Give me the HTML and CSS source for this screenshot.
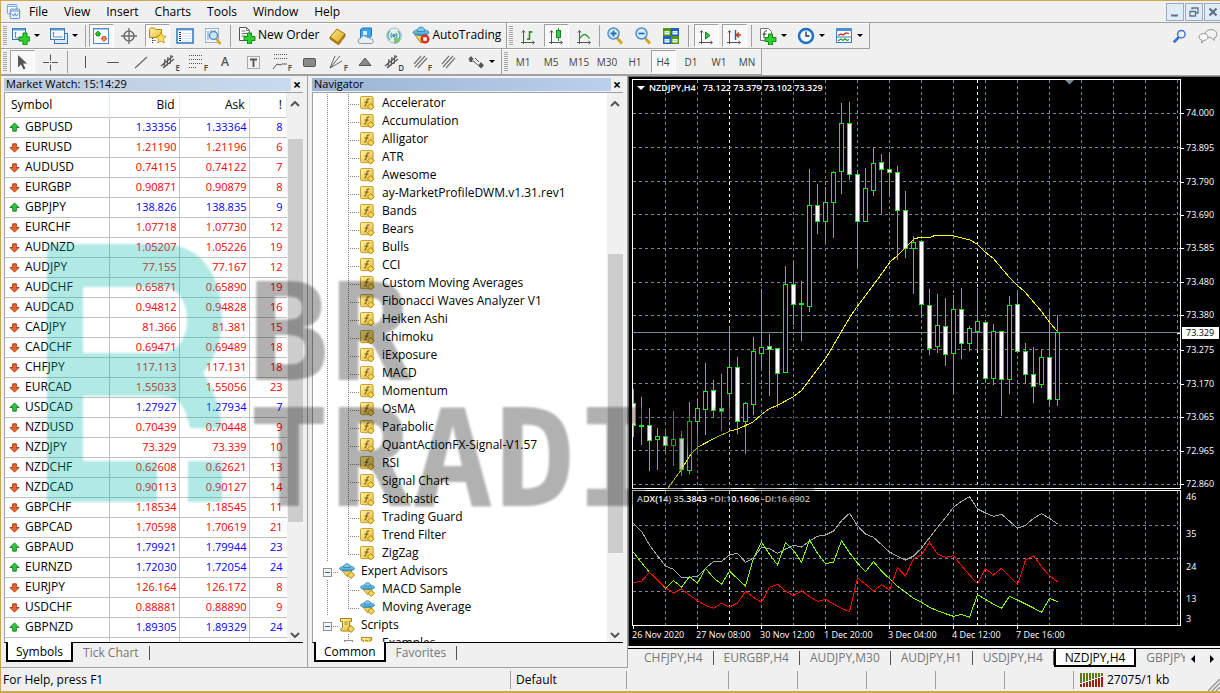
FILE: index.html
```html
<!DOCTYPE html>
<html lang="en">
<head>
<meta charset="utf-8">
<title>NZDJPY,H4</title>
<link rel="stylesheet" href="styles.css">
</head>
<body>
<svg class="sprite" aria-hidden="true">
  <defs>
    <linearGradient id="gold" x1="0" y1="0" x2="1" y2="1"><stop offset="0" stop-color="#fbe68a"/><stop offset="1" stop-color="#dba81c"/></linearGradient>
    <linearGradient id="pale-gold" x1="0" y1="0" x2="1" y2="1"><stop offset="0" stop-color="#fff3a8"/><stop offset="1" stop-color="#e6bc3c"/></linearGradient>
    <linearGradient id="sky" x1="0" y1="0" x2="0" y2="1"><stop offset="0" stop-color="#9fdcf5"/><stop offset="1" stop-color="#2b8cc4"/></linearGradient>
  </defs>
  <symbol id="logo" viewBox="0 0 16 16"><rect x="1.5" y=".5" width="10" height="10" rx="1" fill="#f5f9ff" stroke="#6c9be0"/><path d="M2 2.500h9" stroke="#6c9be0"/><rect x="4.500" y="5.500" width="10" height="10" rx="1" fill="#f5f9ff" stroke="#4a82d8"/><path d="M5 7.500h9" stroke="#4a82d8"/><path d="M6 10l2 3 1.500-3 1.500 3 2-3" fill="none" stroke="#4a82d8"/></symbol>
  <symbol id="new-chart" viewBox="0 0 18 18"><rect x=".5" y="1.500" width="13" height="11" fill="#f4f9fe" stroke="#3c78b4"/><path d="M1 2.500h12" stroke="#5b9bd5" stroke-width="2"/><path d="M3.500 5v6h8M2.500 6h2M10.500 10v2" stroke="#6d8fb0" fill="none"/><path d="M11 6h4v4h3v4h-3v4h-4v-4H7v-4h4z" fill="#2fd02f" stroke="#128a12"/></symbol>
  <symbol id="profiles" viewBox="0 0 18 18"><rect x="4.500" y="6.500" width="13" height="10" fill="#dceaf8" stroke="#3c78b4"/><rect x=".5" y="1.500" width="14" height="11" fill="#f4f9fe" stroke="#3c78b4"/><path d="M1 2.500h13" stroke="#5b9bd5" stroke-width="2"/><path d="M3.500 5v5h9M2.500 6h2" stroke="#6d8fb0" fill="none"/></symbol>
  <symbol id="market" viewBox="0 0 18 18"><rect x="1.500" y="1.500" width="15" height="15" fill="#fbfdff" stroke="#4a90d0"/><path d="M2 2.500h14" stroke="#a9cdee"/><path d="M6 4l3 3H7.500v2h-3V7H3z" fill="#2bc02b" stroke="#128a12" stroke-width=".8"/><path d="M12 14.500l-3-3h1.500v-2h3v2H15z" fill="#ff8a5a" stroke="#c43a0a" stroke-width=".8"/></symbol>
  <symbol id="data-window" viewBox="0 0 18 18"><circle cx="9" cy="9" r="5" fill="none" stroke="#6e6e6e" stroke-width="1.600"/><path d="M9 1v16M1 9h16" stroke="#6e6e6e" stroke-width="1.400"/></symbol>
  <symbol id="navigator" viewBox="0 0 18 18"><path d="M1.500 2.500l1-1.500h4l1 1.500h6v8h-12z" fill="url(#pale-gold)" stroke="#b98a10"/><path d="M4.500 11v6M4.500 13.500h4" stroke="#333" stroke-dasharray="1 1"/><path d="M13 5.500l1.600 3.500 3.400.4-2.600 2.500.8 4.100L13 14l-3.200 2 .8-4.100L8 9.400l3.400-.4z" fill="#ffe25a" stroke="#b98a10" stroke-width=".8"/></symbol>
  <symbol id="terminal" viewBox="0 0 18 18"><rect x="1" y="2" width="16" height="14" fill="#fafdff" stroke="#3c7cc0" stroke-width="1.600"/><path d="M2 3.500h14" stroke="#b5d4f0"/><path d="M4 5v10" stroke="#234" stroke-width="2" stroke-dasharray="1 1"/><path d="M6 6.500h9M6 9h9M6 11.500h9M6 14h9" stroke="#d5e0ec"/></symbol>
  <symbol id="tester" viewBox="0 0 18 18"><rect x="1.500" y="1.500" width="13" height="14" fill="#eef4fa" stroke="#a3b3c2"/><path d="M4 4v9M7 3v5M11 3v4" stroke="#8897a6"/><circle cx="9.500" cy="8.500" r="4" fill="#cbe7fa" stroke="#4f90c8" stroke-width="1.400"/><path d="M12.500 12l4 5" stroke="#d9a520" stroke-width="2.500"/></symbol>
  <symbol id="order" viewBox="0 0 18 18"><path d="M1.500 1.500h7l3 3v10h-10z" fill="#fff" stroke="#555"/><path d="M8.500 1.500v3h3M3.500 5h4M3.500 7.500h6M3.500 10h4" fill="none" stroke="#777"/><path d="M9.500 7h4v3.500H17v4h-3.500V18h-4v-3.500H6v-4h3.500z" fill="#2fd02f" stroke="#128a12"/></symbol>
  <symbol id="book" viewBox="0 0 18 18"><path d="M1 10L8 2l8 5-7 9z" fill="url(#gold)" stroke="#a8720c"/><path d="M1 10l8 6 7-9v2.500L9.500 18 1 12z" fill="#c98a12" stroke="#8f5f08" stroke-width=".7"/></symbol>
  <symbol id="cloud" viewBox="0 0 18 18"><path d="M3.500 2.500l2-1.500h9v8l-2 2h-9z" fill="#3aa4ea" stroke="#1d78bf"/><path d="M6 4h4v4H6z" fill="#d7effc"/><path d="M3.500 16.500a2.500 2.500 0 010-5 3.500 3.500 0 016.500-1 3 3 0 013.500 1.500 2.300 2.300 0 011 4.500z" fill="#e9eef5" stroke="#8797ab"/></symbol>
  <symbol id="signal" viewBox="0 0 18 18"><circle cx="9" cy="8.500" r="7.500" fill="#e4efe8" stroke="#9cc0d8"/><path d="M5 13a6 6 0 010-9M13 4a6 6 0 010 9M7 11a3.500 3.500 0 010-5M11 6a3.500 3.500 0 010 5" fill="none" stroke="#54a8a0" stroke-width="1.300"/><circle cx="9" cy="8.500" r="1.800" fill="#3f90d0"/><path d="M9 10v7c3 0 6-2 7-5z" fill="#7fc27f"/></symbol>
  <symbol id="auto" viewBox="0 0 18 18"><path d="M3 9l6 8 6-5-1-4z" fill="url(#gold)" stroke="#b98a10"/><ellipse cx="9" cy="6.500" rx="8" ry="3" fill="url(#sky)" stroke="#2a7fb0" stroke-width=".8"/><path d="M5 5.500c0-6 8-6 8 0z" fill="#7cc8ec" stroke="#2a7fb0" stroke-width=".8"/><circle cx="13" cy="13" r="4.500" fill="#e02c18"/><rect x="11.200" y="11.200" width="3.600" height="3.600" fill="#fff"/></symbol>
  <symbol id="bars" viewBox="0 0 18 18"><path d="M4.500 4v13M2 15.500h13M3 5.500l1.500-2L6 5.500M13.500 14l2 1.500-2 1.500" stroke="#555" fill="none"/><path d="M10.500 4v9M10.500 5h3M8 12h2.500" stroke="#158a15" stroke-width="1.500"/></symbol>
  <symbol id="candles" viewBox="0 0 18 18"><path d="M4.500 4v13M2 15.500h13M3 5.500l1.500-2L6 5.500M13.500 14l2 1.500-2 1.500" stroke="#555" fill="none"/><path d="M11.500 1v13" stroke="#158a15"/><rect x="9.500" y="3.500" width="4" height="7" fill="#2fd04f" stroke="#158a15"/></symbol>
  <symbol id="line" viewBox="0 0 18 18"><path d="M4.500 4v13M2 15.500h13M3 5.500l1.500-2L6 5.500M13.500 14l2 1.500-2 1.500" stroke="#555" fill="none"/><path d="M4 12c2-2 4-5 6-4.500s3 2 4.500 4" stroke="#2f9a3a" stroke-width="1.300" fill="none"/></symbol>
  <symbol id="zoom-in" viewBox="0 0 18 18"><path d="M11 11l5 5.500" stroke="#d9a520" stroke-width="3"/><circle cx="7.500" cy="6.500" r="5.500" fill="#d6edfb" stroke="#4f90d0" stroke-width="1.500"/><path d="M4.500 6.500h6M7.500 3.500v6" stroke="#2d6cb4" stroke-width="1.800"/></symbol>
  <symbol id="zoom-out" viewBox="0 0 18 18"><path d="M11 11l5 5.500" stroke="#d9a520" stroke-width="3"/><circle cx="7.500" cy="6.500" r="5.500" fill="#d6edfb" stroke="#4f90d0" stroke-width="1.500"/><path d="M4.500 6.500h6" stroke="#2d6cb4" stroke-width="1.800"/></symbol>
  <symbol id="tile" viewBox="0 0 18 18"><path d="M1 1h8v8H1zM9 9h8v8H9z" fill="#4f9a10"/><path d="M9 1h8v8H9zM1 9h8v8H1z" fill="#2060c0"/><path d="M2.500 4h5v3.500h-5zM10.500 4h5v3.500h-5zM2.500 12h5v3.500h-5zM10.500 12h5v3.500h-5z" fill="#f4faf0"/><path d="M3 5.500h4M11 5.500h4M3 13.500h4M11 13.500h4" stroke="#b5cbe0"/></symbol>
  <symbol id="scroll" viewBox="0 0 18 18"><path d="M4.500 4v13M2 15.500h13M3 5.500l1.500-2L6 5.500M13.500 14l2 1.500-2 1.500" stroke="#555" fill="none"/><path d="M8.500 5l4.500 3.500L8.500 12z" fill="#2fc04f" stroke="#158a15"/></symbol>
  <symbol id="shift" viewBox="0 0 18 18"><path d="M4.500 4v13M2 15.500h13M3 5.500l1.500-2L6 5.500M13.500 14l2 1.500-2 1.500" stroke="#555" fill="none"/><path d="M10.500 3v10" stroke="#2864b4" stroke-width="1.500"/><path d="M16 8h-4M14 5.500L11.500 8l2.500 2.500" stroke="#c03a10" stroke-width="1.500" fill="none"/></symbol>
  <symbol id="indicators" viewBox="0 0 18 18"><path d="M1.500 1.500h8l3 3v9h-11z" fill="#fff" stroke="#777"/><path d="M8 4c-3-1-3 2-3 7M3.500 7h4" stroke="#333" fill="none"/><path d="M9.500 7h4v3.500H17v4h-3.500V18h-4v-3.500H6v-4h3.500z" fill="#2fd02f" stroke="#128a12"/></symbol>
  <symbol id="clock" viewBox="0 0 18 18"><circle cx="9" cy="9" r="7" fill="#eef5fb" stroke="#1c6fc4" stroke-width="2.500"/><path d="M9 4.500V9h3.500" fill="none" stroke="#333" stroke-width="1.300"/></symbol>
  <symbol id="template" viewBox="0 0 18 18"><rect x="1.500" y="1.500" width="15" height="14" fill="#fbfdff" stroke="#3c7cc0"/><path d="M1 2.500h16" stroke="#4a90d8" stroke-width="3"/><path d="M3 8.500l3-1.500 2 1 3-2 3 .5" stroke="#b02a10" fill="none" stroke-width="1.200"/><path d="M2 10h14" stroke="#3c7cc0"/><path d="M3 14l3-2 2 1.500 2-2 2 2 2-1" stroke="#1c9a2c" fill="none" stroke-width="1.200"/></symbol>
  <symbol id="search" viewBox="0 0 18 18"><path d="M8 10l-6 6" stroke="#3a6cd8" stroke-width="3"/><circle cx="10.500" cy="7" r="4.200" fill="#eef3ff" stroke="#3a6cd8" stroke-width="1.500"/></symbol>
  <symbol id="chat" viewBox="0 0 22 18"><path d="M8 7c0-7 13-7 13 0 0 3-2 4-3 4v3l-3-3c-5 0-7-1-7-4z" fill="#f2f2f2" stroke="#888"/><path d="M1 10c0-5 10-5 10 0 0 3-3 4-5 4l-2 3v-3.500c-1.500-.3-3-1-3-3.500z" fill="#fafafa" stroke="#888"/></symbol>

  <symbol id="cursor" viewBox="0 0 18 18"><path d="M5 2v12.500l3-3 2.500 5 2-1-2.500-5h4z" fill="#555"/></symbol>
  <symbol id="cross" viewBox="0 0 18 18"><path d="M9.500 1.500v6M9.500 11.500v6M2 9.500h6M11 9.500h6M9 9.500h1" stroke="#555"/></symbol>
  <symbol id="vline" viewBox="0 0 18 18"><path d="M9.500 3v12" stroke="#555"/></symbol>
  <symbol id="hline" viewBox="0 0 18 18"><path d="M3 9.500h12" stroke="#555"/></symbol>
  <symbol id="trend" viewBox="0 0 18 18"><path d="M3 15L15 4" stroke="#666" stroke-width="1.200"/></symbol>
  <symbol id="channel" viewBox="0 0 18 18"><path d="M1 13L13 3M3 15L14 6M5 6l-1 9M8 4l-1 9M11 2l-1 9" stroke="#555" stroke-width="1.200"/></symbol>
  <symbol id="fibo" viewBox="0 0 18 18"><path d="M1 2.500h14M1 6.500h14M1 10.500h14M1 14.500h8" stroke="#555" stroke-dasharray="1 1"/></symbol>
  <symbol id="fibo-arc" viewBox="0 0 18 18"><path d="M2 1.500h14M2 5.500h14" stroke="#555" stroke-dasharray="1 1"/><path d="M1 16l4-5 3 1 2-1h5" stroke="#555" fill="none"/></symbol>
  <symbol id="label" viewBox="0 0 18 18"><rect x="3.500" y="3.500" width="12" height="12" fill="none" stroke="#666" stroke-dasharray="1 1"/><path d="M6 6.500h7M9.500 6v8" stroke="#555" stroke-width="1.800"/></symbol>
  <symbol id="rect" viewBox="0 0 18 18"><rect x="3.500" y="5.500" width="12" height="8" rx="1" fill="#8a8a8a" stroke="#555"/></symbol>
  <symbol id="fan" viewBox="0 0 18 18"><path d="M2 15L7 3M2 15L12 3M2 15l12-7" stroke="#666" fill="none"/></symbol>
  <symbol id="triangle" viewBox="0 0 18 18"><path d="M9 5l6 7.500H3z" fill="#8a8a8a" stroke="#555"/></symbol>
  <symbol id="strokes" viewBox="0 0 18 18"><path d="M2 11L9 3M3 14L13 3M6 15l9-10" stroke="#777" stroke-width="1.200"/></symbol>
  <symbol id="arrows" viewBox="0 0 18 18"><path d="M4 3l3 3.500H5.500V9h-3V6.500H1z" fill="#555"/><path d="M6 8l5 4" stroke="#555"/><path d="M8 5l4 4" stroke="#555"/><path d="M14 9l3 3.500-3 3-3-3z" fill="#555"/></symbol>

  <symbol id="up" viewBox="0 0 12 12"><path d="M6 1l5 5H8v4H4V6H1z" fill="#2cc83c" stroke="#127a1c"/></symbol>
  <symbol id="down" viewBox="0 0 12 12"><path d="M6 11L1 6h3V2h4v4h3z" fill="#f0642c" stroke="#a0340c"/></symbol>
  <symbol id="fx" viewBox="0 0 16 16"><rect x=".5" y=".5" width="13.500" height="13" rx="1.500" fill="url(#pale-gold)" stroke="#c49a28"/><path d="M10 3.500c-2-1.200-2.600.5-2.900 2.500S6.500 11 4.500 10.500M5 6.500h4" fill="none" stroke="#8a6210" stroke-width="1.200"/><path d="M11.500 8l3.500 3.500-3.500 3.500L8 11.500z" fill="#f7d652" stroke="#a87c10"/></symbol>
  <symbol id="expert" viewBox="0 0 16 16"><path d="M3 7.500l5 6 5-3-1-4z" fill="#f0d060" stroke="#a87c10" stroke-width=".8"/><ellipse cx="8" cy="5.500" rx="7.500" ry="2.500" fill="url(#sky)" stroke="#2a7fb0" stroke-width=".8"/><path d="M4.500 4.500c0-5 7-5 7 0z" fill="#7cc8ec" stroke="#2a7fb0" stroke-width=".8"/><path d="M12 8.500l3.500 3.500-3.500 3.500L8.500 12z" fill="#f7d652" stroke="#a87c10"/></symbol>
  <symbol id="script" viewBox="0 0 16 16"><path d="M1.500 1.500h11v3h-2v6l2 1.500-1 2h-9l-1-2 2-1.500v-6h-2z" fill="url(#pale-gold)" stroke="#a87c10"/><path d="M5.500 5h3M5.500 7h3" stroke="#a87c10"/><path d="M12 8.500l3.500 3.500-3.500 3.500L8.500 12z" fill="#f7d652" stroke="#a87c10"/></symbol>
</svg>

<div class="app">
  <header class="menubar">
    <svg class="logo" aria-hidden="true"><use href="#logo"/></svg>
    <nav class="menu">
      <button>File</button><button>View</button><button>Insert</button><button>Charts</button><button>Tools</button><button>Window</button><button>Help</button>
    </nav>
    <div class="window-buttons">
      <button aria-label="Minimize"><svg viewBox="0 0 16 16"><path d="M4 11.500h7" stroke="#5f7086" stroke-width="2"/></svg></button>
      <button aria-label="Restore"><svg viewBox="0 0 16 16"><path d="M6 5.500V4h6v5h-2M4 7.500h5.500V12H4z" fill="none" stroke="#5f7086" stroke-width="1.300"/></svg></button>
      <button aria-label="Close"><svg viewBox="0 0 16 16"><path d="M4.500 4.500l7 7M11.500 4.500l-7 7" stroke="#5f7086" stroke-width="2.200"/></svg></button>
    </div>
  </header>

  <div class="toolbar-row">
    <div class="toolbar" role="toolbar" aria-label="Standard">
      <span class="grip"></span>
      <button class="tool drop" aria-label="New Chart"><svg><use href="#new-chart"/></svg></button>
      <button class="tool drop" aria-label="Profiles"><svg><use href="#profiles"/></svg></button>
      <span class="sep tight"></span>
      <button class="tool on" aria-label="Market Watch"><svg><use href="#market"/></svg></button>
      <button class="tool" aria-label="Data Window"><svg><use href="#data-window"/></svg></button>
      <button class="tool on" aria-label="Navigator"><svg><use href="#navigator"/></svg></button>
      <button class="tool" aria-label="Terminal"><svg><use href="#terminal"/></svg></button>
      <button class="tool" aria-label="Strategy Tester"><svg><use href="#tester"/></svg></button>
      <span class="sep"></span>
      <button class="tool wide"><svg><use href="#order"/></svg>New Order</button>
      <button class="tool" aria-label="MetaEditor"><svg><use href="#book"/></svg></button>
      <button class="tool" aria-label="Hosting"><svg><use href="#cloud"/></svg></button>
      <button class="tool" aria-label="Signals"><svg><use href="#signal"/></svg></button>
      <button class="tool wide"><svg><use href="#auto"/></svg>AutoTrading</button>
    </div>
    <div class="toolbar" role="toolbar" aria-label="Charts">
      <span class="grip"></span>
      <button class="tool" aria-label="Bar Chart"><svg><use href="#bars"/></svg></button>
      <button class="tool on" aria-label="Candlesticks"><svg><use href="#candles"/></svg></button>
      <button class="tool" aria-label="Line Chart"><svg><use href="#line"/></svg></button>
      <span class="sep tight"></span>
      <button class="tool" aria-label="Zoom In"><svg><use href="#zoom-in"/></svg></button>
      <button class="tool" aria-label="Zoom Out"><svg><use href="#zoom-out"/></svg></button>
      <button class="tool" aria-label="Tile Windows"><svg><use href="#tile"/></svg></button>
      <span class="sep"></span>
      <button class="tool on" aria-label="Auto Scroll"><svg><use href="#scroll"/></svg></button>
      <button class="tool on" aria-label="Chart Shift"><svg><use href="#shift"/></svg></button>
      <span class="sep"></span>
      <button class="tool drop" aria-label="Indicators"><svg><use href="#indicators"/></svg></button>
      <button class="tool drop" aria-label="Periods"><svg><use href="#clock"/></svg></button>
      <button class="tool drop" aria-label="Templates"><svg><use href="#template"/></svg></button>
    </div>
    <div class="toolbar-end">
      <button aria-label="Search"><svg><use href="#search"/></svg></button>
      <button aria-label="Chat"><svg><use href="#chat"/></svg></button>
    </div>
  </div>

  <div class="toolbar-row">
    <div class="toolbar" role="toolbar" aria-label="Line Studies">
      <span class="grip"></span>
      <button class="tool on" aria-label="Cursor"><svg><use href="#cursor"/></svg></button>
      <button class="tool" aria-label="Crosshair"><svg><use href="#cross"/></svg></button>
      <span class="sep"></span>
      <button class="tool" aria-label="Vertical Line"><svg><use href="#vline"/></svg></button>
      <button class="tool" aria-label="Horizontal Line"><svg><use href="#hline"/></svg></button>
      <button class="tool" aria-label="Trendline"><svg><use href="#trend"/></svg></button>
      <button class="tool" aria-label="Equidistant Channel"><svg><use href="#channel"/></svg><sub>E</sub></button>
      <button class="tool" aria-label="Fibonacci Retracement"><svg><use href="#fibo"/></svg><sub>F</sub></button>
      <button class="tool letter">A</button>
      <button class="tool" aria-label="Text Label"><svg><use href="#label"/></svg></button>
      <button class="tool" aria-label="Fibonacci Arcs"><svg><use href="#fibo-arc"/></svg><sub>F</sub></button>
      <button class="tool" aria-label="Rectangle"><svg><use href="#rect"/></svg></button>
      <button class="tool" aria-label="Fibonacci Fan"><svg><use href="#fan"/></svg><sub>F</sub></button>
      <button class="tool" aria-label="Triangle"><svg><use href="#triangle"/></svg></button>
      <button class="tool" aria-label="Deviation Channel"><svg><use href="#channel"/></svg><sub>D</sub></button>
      <button class="tool" aria-label="Fibonacci Channel"><svg><use href="#strokes"/></svg><sub>F</sub></button>
      <button class="tool" aria-label="Parallel Lines"><svg><use href="#strokes"/></svg></button>
      <button class="tool drop" aria-label="Arrows"><svg><use href="#arrows"/></svg></button>
    </div>
    <div class="toolbar" role="toolbar" aria-label="Periodicity">
      <span class="grip"></span>
      <button class="tool period">M1</button><button class="tool period">M5</button><button class="tool period">M15</button><button class="tool period">M30</button><button class="tool period">H1</button><button class="tool period on">H4</button><button class="tool period">D1</button><button class="tool period">W1</button><button class="tool period">MN</button>
    </div>
  </div>

  <main class="workspace">
    <section class="panel market">
      <div class="panel-head"><h2>Market Watch: 15:14:29</h2><button aria-label="Close">×</button></div>
      <div class="panel-body">
        <div class="scroll-content">
          <table class="quotes">
            <colgroup><col class="c-symbol"><col class="c-price"><col class="c-price"><col></colgroup>
            <thead><tr><th>Symbol</th><th>Bid</th><th>Ask</th><th>!</th></tr></thead>
            <tbody id="quotes"></tbody>
          </table>
        </div>
        <div class="scrollbar"><svg viewBox="0 0 10 6"><path d="M1 5l4-4 4 4"/></svg><div class="track"><i class="thumb thumb-market"></i></div><svg viewBox="0 0 10 6"><path d="M1 1l4 4 4-4"/></svg></div>
      </div>
      <div class="tabs"><button class="active">Symbols</button><button>Tick Chart</button></div>
    </section>

    <section class="panel navigator">
      <div class="panel-head focus"><h2>Navigator</h2><button aria-label="Close">×</button></div>
      <div class="panel-body">
        <div class="scroll-content"><ul class="tree" id="tree"></ul></div>
        <div class="scrollbar"><svg viewBox="0 0 10 6"><path d="M1 5l4-4 4 4"/></svg><div class="track"><i class="thumb thumb-nav"></i></div><svg viewBox="0 0 10 6"><path d="M1 1l4 4 4-4"/></svg></div>
      </div>
      <div class="tabs"><button class="active">Common</button><button>Favorites</button></div>
    </section>

    <section class="charts">
      <div class="chart">
        <div class="plot">
          <svg id="price" viewBox="633 80 547 408" preserveAspectRatio="none"></svg>
          <p class="plot-title"><svg viewBox="0 0 8 4"><path d="M0 0h8L4 4z" fill="#fff"/></svg><span>NZDJPY,H4&nbsp;&nbsp; 73.122 73.379 73.102 73.329</span></p>
        </div>
        <div class="axis" id="price-axis"></div>
        <div class="plot">
          <svg id="adx" viewBox="633 491 547 134" preserveAspectRatio="none"></svg>
          <p class="plot-title">ADX(14) 35.3843 +DI:10.1606 -DI:16.6902</p>
        </div>
        <div class="axis" id="adx-axis"></div>
        <div class="time" id="time"></div>
      </div>
      <div class="chart-tabs">
        <div class="chart-tab-list">
          <button>CHFJPY,H4</button><button>EURGBP,H4</button><button>AUDJPY,M30</button><button>AUDJPY,H1</button><button>USDJPY,H4</button><button class="active">NZDJPY,H4</button><button>GBPJPY,H4</button>
        </div>
        <div class="tab-scroll">
          <button aria-label="Scroll left"><svg viewBox="0 0 4 8"><path d="M4 0v8L0 4z"/></svg></button>
          <button aria-label="Scroll right"><svg viewBox="0 0 4 8"><path d="M0 0v8l4-4z"/></svg></button>
        </div>
      </div>
    </section>
  </main>

  <footer class="statusbar">
    <span class="help">For Help, press F1</span><span class="profile">Default</span><span class="cell time-cell"></span><span class="cell"></span><span class="cell"></span><span class="cell"></span><span class="cell"></span><span class="cell"></span>
    <span class="traffic"><svg id="signal-bars" viewBox="0 0 24 14"></svg>27075/1 kb</span>
    <svg class="resize" viewBox="0 0 12 12"><path d="M0 12L12 0M4 12l8-8M8 12l4-4" stroke="#999" stroke-width="1.500"/></svg>
  </footer>

  <svg class="watermark" width="1220" height="693" aria-hidden="true">
    <path fill="#00b8a8" fill-rule="evenodd" d="M47 244H165C205 246 222 280 222 318C222 345 213 360 203 373C213 388 220 405 222 428H190C186 410 182 396 160 396H83V461H157V502H47ZM83 287V353H160C178 353 187 338 187 320C187 300 178 287 160 287ZM188 461H222V502H188Z"/>
    <text x="248" y="380">BR</text>
    <text x="248" y="506">TRADING</text>
  </svg>
</div>
<script src="app.js"></script>
</body>
</html>
```
FILE: styles.css
```css
* { box-sizing: border-box; }
body { margin: 0; background: #f0f0f0; color: #000; font: 12px/16px "Open Sans", "Noto Sans", sans-serif; }
button { margin: 0; padding: 0; border: 0; background: none; color: inherit; font: inherit; }
h2, p, ul { margin: 0; padding: 0; font: inherit; list-style: none; }
svg { display: block; }
.sprite { position: absolute; width: 0; height: 0; }

.app { position: relative; display: flex; flex-direction: column; height: 100vh; overflow: hidden; border: solid #d0a550; border-width: 1px 0 2px 1px; }

.menubar { flex: none; display: flex; align-items: center; height: 22px; padding-left: 5px; border-bottom: 1px solid #a0a0a0; }
.logo { width: 15px; height: 15px; }
.menu { display: flex; gap: 16px; margin-left: 8px; }
.window-buttons { display: flex; gap: 1px; margin-left: auto; margin-right: -2px; }
.window-buttons button { width: 18px; height: 18px; border: 1px solid #9aaabf; background: #dfecf9; }
.window-buttons svg { width: 16px; height: 16px; }

.toolbar-row { flex: none; display: flex; height: 26px; }
.toolbar { display: flex; align-items: stretch; border: solid #a0a0a0; border-width: 0 1px 1px 0; box-shadow: inset 0 1px #fff; }
.grip { flex: none; width: 4px; margin: 3px 1px 3px 2px; background: repeating-linear-gradient(#a8a8a8 0 1px, #f0f0f0 1px 2px); }
.sep { flex: none; width: 1px; margin: 2px 3px 1px; background: #a0a0a0; }
.sep.tight { margin: 2px 1px 1px; }
.tool { position: relative; flex: none; display: flex; align-items: center; justify-content: center; width: 28px; }
.tool svg { width: 18px; height: 18px; }
.tool.on::before { content: ""; position: absolute; inset: 1px 1px 1px 2px; z-index: -1; border: 1px solid; border-color: #a0a0a0 #fff #fff #a0a0a0; background: #f8f8f8; }
.tool.on { isolation: isolate; }
.tool.drop { width: 38px; justify-content: flex-start; gap: 4px; padding-left: 4px; }
.tool.drop::after { content: ""; border: 3px solid transparent; border-top-color: #000; border-bottom: 0; }
.tool.wide { width: auto; gap: 2px; padding: 0 5px 2px 4px; }
.tool.period { color: #444; font-size: 10px; }
.tool.letter { color: #555; font-weight: 600; font-size: 12px; }
.tool sub { position: absolute; right: 3px; bottom: 2px; color: #444; font-size: 8px; line-height: 8px; font-weight: 600; }
.toolbar-end { display: flex; align-items: center; gap: 8px; margin-left: auto; padding-right: 2px; }
.toolbar-end svg { width: 20px; height: 16px; }

.workspace { flex: 1; min-height: 0; display: grid; grid-template-columns: 307px 320px minmax(0, 1fr); border-top: 1px solid #a0a0a0; }
.panel { display: flex; flex-direction: column; min-height: 0; padding: 2px 4px 2px 3px; border-right: 1px solid #a0a0a0; border-bottom: 1px solid #a0a0a0; }
.navigator { padding-left: 4px; }
.panel-head { flex: none; display: flex; align-items: center; justify-content: space-between; height: 13px; }
.panel-head h2 { flex: 1; height: 13px; padding-left: 2px; background: linear-gradient(90deg, #bccadd, #c9daee); font-size: 11px; line-height: 12px; }
.panel-head.focus h2 { background: linear-gradient(90deg, #9ab4d3, #bad0ec); }
.panel-head button { width: 12px; font-weight: 700; font-size: 14px; line-height: 12px; }
.panel-body { flex: 1; min-height: 0; display: flex; margin-top: 1px; border: solid #a0a0a0; border-width: 1px 0 0 1px; border-bottom: 1px solid #000; background: #fff; }
.scroll-content { flex: 1; min-width: 0; overflow: hidden; }
.scrollbar { flex: none; display: flex; flex-direction: column; align-items: center; width: 16px; padding: 8px 0 4px; background: #f0f0f0; }
.scrollbar svg { width: 10px; height: 6px; fill: none; stroke: #555; stroke-width: 2; }
.track { flex: 1; position: relative; width: 15px; }
.thumb { position: absolute; left: 0; right: 0; background: #cdcdcd; }
.thumb-market { top: 6%; bottom: 21%; }
.thumb-nav { top: 28%; bottom: 15%; }

.quotes { width: 100%; table-layout: fixed; border-collapse: collapse; font-size: 12px; }
.c-symbol { width: 104px; }
.c-price { width: 70px; }
.quotes th { height: 24px; padding: 0 4px 0 6px; border: solid #e3edf7; border-width: 0 1px 0 0; font-weight: 400; text-align: right; }
.quotes th:first-child { text-align: left; }
.quotes td { height: 20px; padding: 0 2px; border: 1px solid #c0c0c0; border-left: 0; font-size: 11px; line-height: 16px; text-align: right; }
.quotes td:last-child { border-right: 0; padding-right: 4px; }
.quotes td:first-child { padding-left: 4px; }
.symbol { display: flex; align-items: center; gap: 5px; font-size: 12px; }
.symbol svg { width: 11px; height: 11px; }
.rise td { color: #0000ff; }
.fall td { color: #ff0000; }
.quotes td:first-child { color: #000; }

.tree { padding: 1px 0 0 10px; }
.tree li { position: relative; display: flex; align-items: center; height: 18px; padding-left: 37px; gap: 7px; white-space: nowrap; }
.tree li::before { content: ""; position: absolute; left: 25px; top: 0; bottom: 0; width: 11px; background: repeating-linear-gradient(#808080 0 1px, transparent 1px 2px) 0 0 / 1px 100% no-repeat, repeating-linear-gradient(90deg, #808080 0 1px, transparent 1px 2px) 0 10px / 100% 1px no-repeat; }
.tree li.last::before { bottom: 7px; }
.tree li.inner::after { content: ""; position: absolute; left: 4px; top: 0; bottom: 0; width: 1px; background: repeating-linear-gradient(#808080 0 1px, transparent 1px 2px); }
.tree li.group { padding-left: 0; gap: 6px; }
.tree li.group::before { left: 10px; width: 6px; background: repeating-linear-gradient(90deg, #808080 0 1px, transparent 1px 2px) 0 10px / 100% 1px no-repeat; }
.tree svg { width: 15px; height: 15px; }
.tree .group svg { width: 16px; height: 16px; margin-left: 1px; }
.box { flex: none; width: 9px; height: 9px; margin-top: 3px; border: 1px solid #909090; background: linear-gradient(#3c5fa0, #3c5fa0) center / 5px 1px no-repeat #f6f6f6; }
.tree li.cut .box { position: absolute; left: 21px; }

.tabs { flex: none; display: flex; align-items: flex-start; height: 22px; padding-left: 2px; color: #777; }
.tabs button { height: 17px; padding: 0 10px; line-height: 17px; }
.tabs button + button { border-right: 1px solid #555; height: 14px; margin-top: 3px; line-height: 12px; }
.tabs .active { height: 20px; margin-top: -1px; padding: 0 8px; border: 1px solid #000; border-width: 0 2px 2px; background: #fff; color: #000; line-height: 19px; }

.charts { display: flex; flex-direction: column; min-width: 0; min-height: 0; }
.chart { flex: 1; min-height: 0; display: grid; grid-template: 410fr 136fr 19px / minmax(0, 1fr) 39px; row-gap: 1px; padding: 2px 0 0 3px; border: solid #6c6c6c; border-width: 1px 0 0 1px; background: #000; color: #fff; font-size: 9px; line-height: 12px; }
.plot { position: relative; min-height: 0; border: 1px solid #fff; }
.plot > svg { width: 100%; height: 100%; }
.plot-title { position: absolute; left: 4px; top: 2px; display: flex; align-items: center; gap: 4px; font-weight: 600; white-space: nowrap; }
.plot-title svg { width: 8px; height: 4px; }
.axis, .time { position: relative; }
.axis span { position: absolute; left: 5px; margin-top: -6px; }
.axis span::before { content: ""; position: absolute; left: -5px; top: 6px; width: 3px; height: 1px; background: #fff; }
.axis .now { left: 1px; right: 1px; padding-left: 4px; background: #fff; color: #000; }
#adx-axis span::before { display: none; }
.time span { position: absolute; top: 2px; white-space: nowrap; }
.time span::before { content: ""; position: absolute; left: 1px; top: -3px; width: 1px; height: 3px; background: #fff; }
.grid { stroke: #778899; stroke-dasharray: 3 3; }
.day { stroke: #fff; stroke-dasharray: 3 3; }
.candle { stroke: #00ff00; }
.study { fill: none; stroke-width: 1; }
.chart-tabs { flex: none; display: flex; height: 20px; margin: 2px 0 0; border-top: 1px solid #000; color: #777; }
.chart-tab-list { flex: 1; min-width: 0; display: flex; overflow: hidden; padding-left: 6px; }
.chart-tab-list button { flex: none; height: 14px; margin-top: 2px; padding: 0 10px; border-right: 1px solid #555; line-height: 14px; }
.chart-tab-list .active { height: 18px; margin-top: 0; padding: 1px 9px 0; border: 1px solid #000; border-width: 0 2px 2px; background: #fff; color: #000; line-height: 15px; }
.tab-scroll { display: flex; gap: 15px; padding: 0 6px; }
.tab-scroll svg { width: 4px; height: 8px; }

.statusbar { flex: none; display: flex; align-items: center; height: 23px; white-space: nowrap; }
.statusbar span { height: 18px; line-height: 18px; border-right: 1px solid #a0a0a0; }
.help { width: 510px; padding-left: 2px; }
.profile { width: 116px; padding-left: 5px; }
.cell { flex: 0 1 69px; }
.time-cell { flex-basis: 102px; }
.statusbar .traffic { display: flex; align-items: center; gap: 3px; margin-left: 6px; border: 0; }
.traffic svg { width: 24px; height: 14px; }
.resize { width: 12px; height: 12px; margin-left: auto; align-self: flex-end; }

.watermark { position: absolute; left: -1px; top: -1px; opacity: .3; filter: blur(1px); pointer-events: none; }
.watermark text { font: 700 136px "DejaVu Sans Mono", monospace; }
```
FILE: app.js
```js
const quotes = `GBPUSD 1.33356 1.33364 8 u
EURUSD 1.21190 1.21196 6 d
AUDUSD 0.74115 0.74122 7 d
EURGBP 0.90871 0.90879 8 d
GBPJPY 138.826 138.835 9 u
EURCHF 1.07718 1.07730 12 d
AUDNZD 1.05207 1.05226 19 d
AUDJPY 77.155 77.167 12 d
AUDCHF 0.65871 0.65890 19 d
AUDCAD 0.94812 0.94828 16 d
CADJPY 81.366 81.381 15 d
CADCHF 0.69471 0.69489 18 d
CHFJPY 117.113 117.131 18 d
EURCAD 1.55033 1.55056 23 d
USDCAD 1.27927 1.27934 7 u
NZDUSD 0.70439 0.70448 9 d
NZDJPY 73.329 73.339 10 d
NZDCHF 0.62608 0.62621 13 d
NZDCAD 0.90113 0.90127 14 d
GBPCHF 1.18534 1.18545 11 d
GBPCAD 1.70598 1.70619 21 d
GBPAUD 1.79921 1.79944 23 u
EURNZD 1.72030 1.72054 24 u
EURJPY 126.164 126.172 8 d
USDCHF 0.88881 0.88890 9 d
GBPNZD 1.89305 1.89329 24 u`.split("\n").map(r => r.split(" "));

document.getElementById("quotes").innerHTML = quotes.map(([s, bid, ask, spread, dir]) => {
  const up = dir === "u";
  return `<tr class="${up ? "rise" : "fall"}"><td><div class="symbol"><svg><use href="#${up ? "up" : "down"}"/></svg>${s}</div></td><td>${bid}</td><td>${ask}</td><td>${spread}</td></tr>`;
}).join("") + "<tr><td></td><td></td><td></td><td></td></tr>";

const indicators = ["Accelerator", "Accumulation", "Alligator", "ATR", "Awesome", "ay-MarketProfileDWM.v1.31.rev1", "Bands", "Bears", "Bulls", "CCI", "Custom Moving Averages", "Fibonacci Waves Analyzer V1", "Heiken Ashi", "Ichimoku", "iExposure", "MACD", "Momentum", "OsMA", "Parabolic", "QuantActionFX-Signal-V1.57", "RSI", "Signal Chart", "Stochastic", "Trading Guard", "Trend Filter", "ZigZag"];
const leaf = (name, icon, cls) => `<li class="${cls}"><svg><use href="#${icon}"/></svg>${name}</li>`;
const group = (name, icon) => `<li class="group"><span class="box"></span><svg><use href="#${icon}"/></svg>${name}</li>`;
document.getElementById("tree").innerHTML =
  indicators.map((n, i) => leaf(n, "fx", i === indicators.length - 1 ? "inner last" : "inner")).join("") +
  group("Expert Advisors", "expert") +
  leaf("MACD Sample", "expert", "inner") + leaf("Moving Average", "expert", "inner last") +
  group("Scripts", "script") +
  `<li class="cut"><span class="box"></span><svg><use href="#script"/></svg>Examples</li>`;

const X0 = 633, STEP = 8;
const at = i => X0 + i * STEP + 0.5;
const line = (x1, y1, x2, y2, cls) => `<line x1="${x1}" y1="${y1}" x2="${x2}" y2="${y2}" class="${cls}"/>`;

// high, body top, body bottom, low, falling
const candles = [
  [389,403,425,437,1],[397,425,426,445,1],[408,425,440,471,1],[428,436,439,470,0],[430,436,445,453,1],[411,439,445,466,0],
  [431,438,469,476,1],[402,421,470,474,0],[401,408,421,452,0],[363,391,409,435,0],[380,390,410,418,1],[374,408,411,431,1],
  [326,367,393,420,0],[357,367,421,434,1],[402,403,421,454,0],[337,351,404,415,0],[289,347,353,368,0],[334,346,349,396,1],
  [348,348,373,408,1],[266,284,372,373,0],[262,284,304,325,1],[281,303,304,341,1],[169,205,306,312,0],[184,205,221,234,1],
  [187,202,221,242,0],[171,172,202,238,0],[103,123,171,194,0],[102,123,174,180,1],[170,174,221,267,1],[168,188,221,221,0],
  [148,163,190,196,0],[154,162,169,214,1],[153,169,172,195,1],[166,172,210,260,1],[191,210,248,258,1],[236,242,248,294,0],
  [240,241,304,318,1],[289,305,348,355,1],[294,325,346,353,0],[298,326,354,366,1],[295,309,353,394,0],[288,309,343,359,1],
  [326,328,343,351,0],[288,321,331,350,0],[321,322,378,382,1],[324,331,378,385,0],[331,331,379,416,1],[296,305,379,394,0],
  [293,304,351,353,1],[343,351,374,384,1],[347,374,386,403,1],[350,357,384,388,0],[311,357,399,405,1],[315,332,399,406,0]
];
const verticals = (y1, y2) => {
  let out = "";
  for (let x = 665.5; x < 1180; x += 32) if (x !== 729.5) out += line(x, y1, x, y2, "grid");
  return out + line(729.5, y1, 729.5, y2, "day") + line(977.5, y1, 977.5, y2, "day");
};
const priceRows = [[113,"74.000"],[147,"73.895"],[181,"73.790"],[214,"73.690"],[248,"73.585"],[282,"73.480"],[315,"73.380"],[349,"73.275"],[383,"73.170"],[417,"73.065"],[450,"72.965"],[484,"72.860"]];
const average = "668,488 681,470 691,454 698,447 715,438 730,431 738,429 753,422 761,415 769,409 778,405 793,397 802,390 826,358 833,346 850,317 859,304 875,283 890,262 898,255 914,239 921,237 931,237 936,235 950,235 970,240 977,244 985,252 993,258 1009,277 1017,285 1025,292 1042,312 1050,323 1057,331";

document.getElementById("price").innerHTML =
  verticals(80, 488) +
  priceRows.map(([y]) => line(633, y + .5, 1180, y + .5, "grid")).join("") +
  `<line x1="633" y1="332.5" x2="1180" y2="332.5" stroke="#778899"/>` +
  candles.map(([h, t, b, l, falling], i) => {
    const x = at(i);
    return `<g class="candle"><path d="M${x} ${h}V${l}"/><rect x="${x - 2}" y="${t + .5}" width="4" height="${Math.max(b - t, 1)}" fill="${falling ? "#fff" : "#000"}"/></g>`;
  }).join("") +
  `<polyline class="study" stroke="#ffff00" shape-rendering="crispEdges" points="${average}"/>` +
  `<path d="M1065 80h9l-4.500 4.500z" fill="#778899"/>`;

const studies = {
  "#a9a9a9": [115,139,180,212,243,253,277,277,274,250,230,229,210,205,232,219,187,191,205,192,181,186,168,154,150,138,107,85,122,147,157,179,201,214,225,213,190,158,127,98,67,49,35,72,84,94,88,108,130,121,100,86,100,117],
  "#7fff00": [202,233,262,285,310,287,306,275,295,250,278,298,258,281,303,220,172,208,240,173,196,232,165,205,236,232,167,203,234,260,230,258,281,304,322,340,352,367,377,386,394,388,397,329,343,358,370,334,345,357,369,382,340,350],
  "#ff0000": [293,289,262,285,308,324,312,330,347,361,370,355,366,354,319,337,352,307,298,318,332,317,335,349,343,357,370,380,279,298,318,299,315,248,273,221,210,172,207,217,212,242,270,296,251,270,250,274,299,225,212,245,272,290]
};
document.getElementById("adx").innerHTML =
  verticals(491, 625) +
  [525, 558, 591].map(y => line(633, y + .5, 1180, y + .5, "grid")).join("") +
  Object.entries(studies).map(([color, v]) => `<polyline class="study" shape-rendering="crispEdges" stroke="${color}" points="${v.map((y, i) => `${at(i)},${(485 + y / 3).toFixed(1)}`).join(" ")}"/>`).join("");

const label = (y, text, top, height, cls = "") => `<span class="${cls}" style="top:${((y + .5 - top) / height * 100).toFixed(2)}%">${text}</span>`;
document.getElementById("price-axis").innerHTML = priceRows.map(([y, t]) => label(y, t, 79, 410)).join("") + label(332, "73.329", 79, 410, "now");
document.getElementById("adx-axis").innerHTML = [[497,46],[533,35],[566,24],[599,13],[618,3]].map(([y, t]) => label(y, t, 490, 136)).join("");
document.getElementById("time").innerHTML = ["26 Nov 2020", "27 Nov 08:00", "30 Nov 12:00", "1 Dec 20:00", "3 Dec 04:00", "4 Dec 12:00", "7 Dec 16:00"]
  .map((t, i) => `<span style="left:${(i * 64 / 549 * 100).toFixed(2)}%">${t}</span>`).join("");

let bars = "";
for (let i = 0; i < 8; i++) {
  const split = 10 - i;
  bars += `<path d="M${i * 3 + 1} 0V${split}" stroke="#5a7a10" stroke-width="2"/><path d="M${i * 3 + 1} ${split + 1}V14" stroke="#a02010" stroke-width="2"/>`;
}
document.getElementById("signal-bars").innerHTML = bars;
```
